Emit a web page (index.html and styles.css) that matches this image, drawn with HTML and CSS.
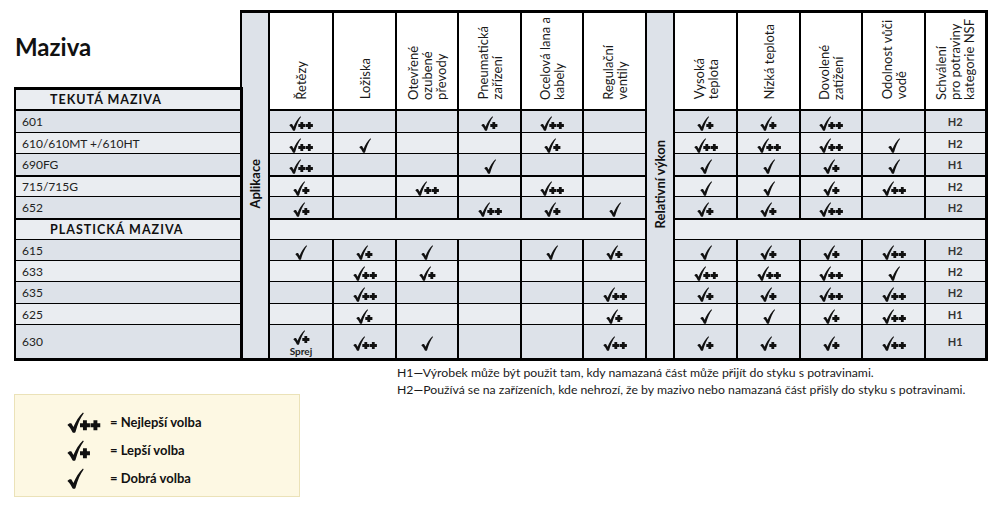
FILE: index.html
```html
<!DOCTYPE html>
<html lang="cs">
<head>
<meta charset="utf-8">
<title>Maziva</title>
<link rel="stylesheet" href="styles.css">
</head>
<body>
<svg class="defs" width="0" height="0" aria-hidden="true">
  <defs>
    <path id="ckp" d="M0.3 9.2 C1.2 8.2 2.4 7.8 3.2 8.3 L4.6 10.8 C6.2 6.6 8.6 3.0 11.4 0.3 L12 0.9 C9.6 4.0 7.6 8.6 6.0 14.4 C5.5 14.9 4.4 14.9 3.9 14.4 C3.0 12.4 1.8 10.6 0.3 9.2 Z"/>
    <path id="pl1" d="M9.3 8.1 H11.4 V5.9 H14.2 V8.1 H16.4 V10.9 H14.2 V13.1 H11.4 V10.9 H9.3 Z"/>
    <path id="pl2" d="M16.8 8.1 H18.9 V5.9 H21.7 V8.1 H23.9 V10.9 H21.7 V13.1 H18.9 V10.9 H16.8 Z"/>
    <symbol id="s1" viewBox="0 0 12 15"><use href="#ckp"/></symbol>
    <symbol id="s2" viewBox="0 0 17 15"><use href="#ckp"/><use href="#pl1"/></symbol>
    <symbol id="s3" viewBox="0 0 24 15"><use href="#ckp"/><use href="#pl1"/><use href="#pl2"/></symbol>
  </defs>
</svg>

<main class="page">
<table class="grid">
  <colgroup>
    <col class="w-name"><col class="w-band">
    <col class="w64"><col class="w63"><col class="w62"><col class="w63"><col class="w62"><col class="w63">
    <col class="w-band">
    <col class="w63"><col class="w63"><col class="w62"><col class="w63"><col class="w61">
  </colgroup>
  <tr class="r-head">
    <td class="title-cell"><h1 class="title">Maziva</h1></td>
    <td class="band" rowspan="13"><span class="vl">Aplikace</span></td>
    <th class="colh" rowspan="2"><span class="vt">Řetězy</span></th>
    <th class="colh" rowspan="2"><span class="vt">Ložiska</span></th>
    <th class="colh" rowspan="2"><span class="vt">Otevřené<br>ozubené<br>převody</span></th>
    <th class="colh" rowspan="2"><span class="vt">Pneumatická<br>zařízení</span></th>
    <th class="colh" rowspan="2"><span class="vt">Ocelová lana a<br>kabely</span></th>
    <th class="colh" rowspan="2"><span class="vt">Regulační<br>ventily</span></th>
    <td class="band" rowspan="13"><span class="vl">Relativní výkon</span></td>
    <th class="colh" rowspan="2"><span class="vt">Vysoká<br>teplota</span></th>
    <th class="colh" rowspan="2"><span class="vt">Nízká teplota</span></th>
    <th class="colh" rowspan="2"><span class="vt">Dovolené<br>zatížení</span></th>
    <th class="colh" rowspan="2"><span class="vt">Odolnost vůči<br>vodě</span></th>
    <th class="colh" rowspan="2"><span class="vt">Schválení<br>pro potraviny<br>kategorie NSF</span></th>
  </tr>
  <tr class="r-sec">
    <td class="sec">TEKUTÁ MAZIVA</td>
  </tr>
  <tr class="dk r23">
    <td class="name">601</td>
    <td><svg class="k3"><use href="#s3"/></svg></td><td></td><td></td>
    <td><svg class="k2"><use href="#s2"/></svg></td><td><svg class="k3"><use href="#s3"/></svg></td><td></td>
    <td><svg class="k2"><use href="#s2"/></svg></td><td><svg class="k2"><use href="#s2"/></svg></td><td><svg class="k3"><use href="#s3"/></svg></td><td></td><td class="h">H2</td>
  </tr>
  <tr class="lt r21">
    <td class="name">610/610MT +/610HT</td>
    <td><svg class="k3"><use href="#s3"/></svg></td><td><svg class="k1"><use href="#s1"/></svg></td><td></td>
    <td></td><td><svg class="k2"><use href="#s2"/></svg></td><td></td>
    <td><svg class="k3"><use href="#s3"/></svg></td><td><svg class="k3"><use href="#s3"/></svg></td><td><svg class="k3"><use href="#s3"/></svg></td><td><svg class="k1"><use href="#s1"/></svg></td><td class="h">H2</td>
  </tr>
  <tr class="dk r22 thick">
    <td class="name">690FG</td>
    <td><svg class="k3"><use href="#s3"/></svg></td><td></td><td></td>
    <td><svg class="k1"><use href="#s1"/></svg></td><td></td><td></td>
    <td><svg class="k1"><use href="#s1"/></svg></td><td><svg class="k1"><use href="#s1"/></svg></td><td><svg class="k2"><use href="#s2"/></svg></td><td><svg class="k1"><use href="#s1"/></svg></td><td class="h">H1</td>
  </tr>
  <tr class="lt r21">
    <td class="name">715/715G</td>
    <td><svg class="k2"><use href="#s2"/></svg></td><td></td><td><svg class="k3"><use href="#s3"/></svg></td>
    <td></td><td><svg class="k3"><use href="#s3"/></svg></td><td></td>
    <td><svg class="k1"><use href="#s1"/></svg></td><td><svg class="k1"><use href="#s1"/></svg></td><td><svg class="k2"><use href="#s2"/></svg></td><td><svg class="k3"><use href="#s3"/></svg></td><td class="h">H2</td>
  </tr>
  <tr class="dk r22 thick">
    <td class="name">652</td>
    <td><svg class="k2"><use href="#s2"/></svg></td><td></td><td></td>
    <td><svg class="k3"><use href="#s3"/></svg></td><td><svg class="k2"><use href="#s2"/></svg></td><td><svg class="k1"><use href="#s1"/></svg></td>
    <td><svg class="k2"><use href="#s2"/></svg></td><td><svg class="k2"><use href="#s2"/></svg></td><td><svg class="k3"><use href="#s3"/></svg></td><td></td><td class="h">H2</td>
  </tr>
  <tr class="lt r21">
    <td class="sec sec2">PLASTICKÁ MAZIVA</td>
    <td class="gap" colspan="6"></td>
    <td class="gap" colspan="5"></td>
  </tr>
  <tr class="dk r21">
    <td class="name">615</td>
    <td><svg class="k1"><use href="#s1"/></svg></td><td><svg class="k2"><use href="#s2"/></svg></td><td><svg class="k1"><use href="#s1"/></svg></td>
    <td></td><td><svg class="k1"><use href="#s1"/></svg></td><td><svg class="k2"><use href="#s2"/></svg></td>
    <td><svg class="k1"><use href="#s1"/></svg></td><td><svg class="k2"><use href="#s2"/></svg></td><td><svg class="k2"><use href="#s2"/></svg></td><td><svg class="k3"><use href="#s3"/></svg></td><td class="h">H2</td>
  </tr>
  <tr class="lt r21">
    <td class="name">633</td>
    <td></td><td><svg class="k3"><use href="#s3"/></svg></td><td><svg class="k2"><use href="#s2"/></svg></td>
    <td></td><td></td><td></td>
    <td><svg class="k3"><use href="#s3"/></svg></td><td><svg class="k3"><use href="#s3"/></svg></td><td><svg class="k3"><use href="#s3"/></svg></td><td><svg class="k1"><use href="#s1"/></svg></td><td class="h">H2</td>
  </tr>
  <tr class="dk r22">
    <td class="name">635</td>
    <td></td><td><svg class="k3"><use href="#s3"/></svg></td><td></td>
    <td></td><td></td><td><svg class="k3"><use href="#s3"/></svg></td>
    <td><svg class="k2"><use href="#s2"/></svg></td><td><svg class="k2"><use href="#s2"/></svg></td><td><svg class="k3"><use href="#s3"/></svg></td><td><svg class="k3"><use href="#s3"/></svg></td><td class="h">H2</td>
  </tr>
  <tr class="lt r21">
    <td class="name">625</td>
    <td></td><td><svg class="k2"><use href="#s2"/></svg></td><td></td>
    <td></td><td></td><td><svg class="k2"><use href="#s2"/></svg></td>
    <td><svg class="k1"><use href="#s1"/></svg></td><td><svg class="k1"><use href="#s1"/></svg></td><td><svg class="k2"><use href="#s2"/></svg></td><td><svg class="k3"><use href="#s3"/></svg></td><td class="h">H1</td>
  </tr>
  <tr class="dk r35">
    <td class="name">630</td>
    <td class="stack"><svg class="k2"><use href="#s2"/></svg><span class="sprej">Sprej</span></td><td><svg class="k3"><use href="#s3"/></svg></td><td><svg class="k1"><use href="#s1"/></svg></td>
    <td></td><td></td><td><svg class="k3"><use href="#s3"/></svg></td>
    <td><svg class="k2"><use href="#s2"/></svg></td><td><svg class="k2"><use href="#s2"/></svg></td><td><svg class="k2"><use href="#s2"/></svg></td><td><svg class="k3"><use href="#s3"/></svg></td><td class="h">H1</td>
  </tr>
</table>

<section class="bottom">
  <div class="notes">
    <p>H1—Výrobek může být použit tam, kdy namazaná část může přijít do styku s potravinami.</p>
    <p>H2—Používá se na zařízeních, kde nehrozí, že by mazivo nebo namazaná část přišly do styku s potravinami.</p>
  </div>
  <div class="legend">
    <svg class="L3"><use href="#s3"/></svg><span>= Nejlepší volba</span>
    <svg class="L2"><use href="#s2"/></svg><span>= Lepší volba</span>
    <svg class="L1"><use href="#s1"/></svg><span>= Dobrá volba</span>
  </div>
</section>
</main>
</body>
</html>
```

FILE: styles.css
```css
* { box-sizing: border-box; }
html, body { margin: 0; padding: 0; background: #fff; }
body {
  width: 1003px;
  height: 512px;
  overflow: hidden;
  font-family: Lato, "Open Sans", "DejaVu Sans", sans-serif;
  color: #1a1a1a;
}
.defs { display: block; width: 0; height: 0; overflow: hidden; }
.page { padding: 10px 0 0 14px; }

/* ---------- table ---------- */
.grid {
  border-collapse: collapse;
  table-layout: fixed;
  width: 971px;
}
.w-name { width: 226px; }
.w-band { width: 28px; }
.w64 { width: 64px; }
.w63 { width: 63px; }
.w62 { width: 62px; }
.w61 { width: 61px; }

.grid td, .grid th {
  padding: 0;
  border-style: solid;
  border-color: #000;
  border-width: 1px 2px;
  text-align: center;
  vertical-align: middle;
  font-weight: 400;
}
.grid tr > :last-child { border-right-width: 3px; }
.grid tr:last-child td { border-bottom-width: 3px; }
.grid tr.thick td { border-bottom-width: 2px; }

.r-head { height: 77px; }
.r-sec { height: 21px; }
.r21 { height: 21px; }
.r22 { height: 22px; }
.r23 { height: 23px; }
.r35 { height: 35px; }

.dk td { background: #dde2e9; }
.lt td { background: #eaedf1; }

.grid .title-cell {
  border: none;
  text-align: left;
  vertical-align: top;
  background: #fff;
}
.title {
  margin: 0;
  padding-top: 23px;
  font-size: 24px;
  line-height: 24px;
  font-weight: 700;
  color: #111;
}

.grid .band {
  background: #dde2e9;
  border-width: 3px 2px 3px 2px;
}
.grid .band:first-of-type { border-left-width: 3px; }

.grid .colh {
  background: #fff;
  border-top-width: 3px;
  border-bottom-width: 2px;
  vertical-align: bottom;
  padding-bottom: 6px;
}
.vt {
  display: inline-block;
  writing-mode: vertical-rl;
  transform: rotate(180deg);
  text-align: left;
  white-space: nowrap;
  font-size: 13px;
  line-height: 14px;
  color: #1a1a1a;
}
.vl {
  display: inline-block;
  writing-mode: vertical-rl;
  transform: rotate(180deg);
  white-space: nowrap;
  font-size: 13px;
  font-weight: 700;
  color: #111;
}

.grid .sec {
  background: #eaedf1;
  border-width: 3px 3px 2px 2px;
  text-align: left;
  padding-left: 34px;
  font-size: 12.5px;
  font-weight: 700;
  letter-spacing: 1px;
  color: #111;
}
.grid .sec2 { border-top-width: 2px; border-bottom-width: 1px; }
.grid .gap { border-top-width: 2px; }

.grid .name {
  border-left-width: 2px;
  border-right-width: 3px;
  text-align: left;
  padding-left: 6px;
  font-size: 12px;
  color: #222;
}
.grid .h {
  font-size: 11px;
  font-weight: 700;
  color: #333;
}

svg.k1, svg.k2, svg.k3 { display: inline-block; vertical-align: middle; height: 15px; fill: #111; }
svg.k1 { width: 12px; }
svg.k2 { width: 17px; }
svg.k3 { width: 24px; }
.grid .stack { padding-top: 3px; }
.stack svg { display: block; margin: 0 auto; }
.sprej {
  display: block;
  font-size: 10px;
  line-height: 12px;
  font-weight: 700;
  color: #222;
}

/* ---------- bottom ---------- */
.bottom {
  display: grid;
  grid-template-columns: 286px 1fr;
  column-gap: 97px;
  align-items: start;
}
.notes {
  grid-column: 2;
  grid-row: 1;
  margin-top: 3px;
  font-size: 12.25px;
  line-height: 17px;
  color: #1a1a1a;
}
.notes p { margin: 0; white-space: nowrap; }

.legend {
  grid-column: 1;
  grid-row: 1;
  margin-top: 33px;
  height: 103px;
  background: #fdf8e3;
  border: 1px solid #ebe2b8;
  display: grid;
  grid-template-columns: 43px auto;
  grid-auto-rows: 28px;
  align-items: center;
  padding: 13px 0 0 52px;
  font-size: 13px;
  font-weight: 700;
  color: #111;
}
.legend svg { fill: #111; height: 21px; }
.legend .L1 { width: 16.8px; }
.legend .L2 { width: 23.8px; }
.legend .L3 { width: 33.6px; }
```
